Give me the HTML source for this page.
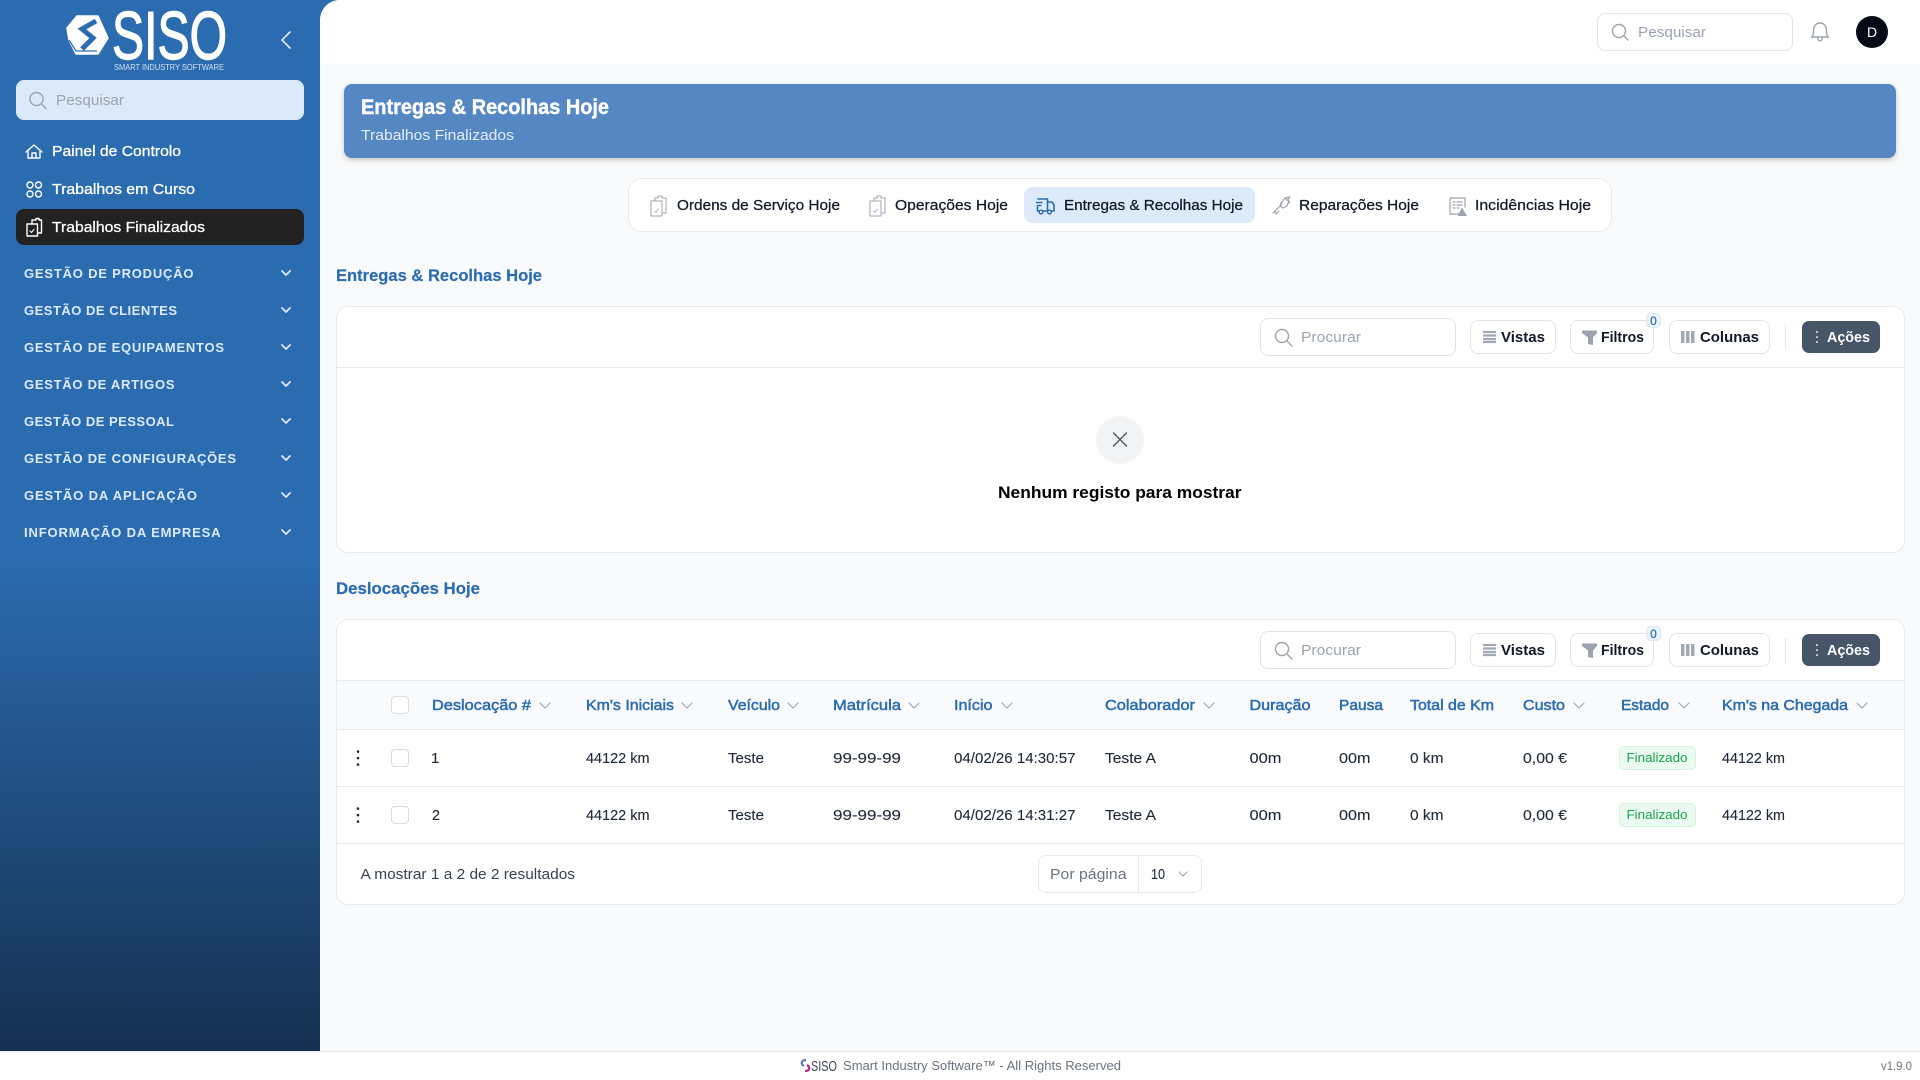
<!DOCTYPE html>
<html lang="pt"><head><meta charset="utf-8"><title>SISO</title>
<style>
html,body{margin:0;padding:0;width:1920px;height:1080px;overflow:hidden;background:#fff;font-family:"Liberation Sans",sans-serif}
div{position:absolute;box-sizing:border-box}
svg{position:absolute;left:0;top:0}
text{font-family:"Liberation Sans",sans-serif;font-size:15px;fill:#1f2937;stroke:#1f2937;stroke-width:.12px}
.g{fill:#9ca3af;stroke:none}
.h{fill:#2b6cb0;stroke:#2b6cb0;stroke-width:.5px;font-size:15px}
.n{fill:#fff;stroke:#fff;stroke-width:.3px;font-size:15px}
.l{fill:#dbeafe;stroke:none;font-weight:700;font-size:13px}
.s{fill:#2b6cb0;stroke:#2b6cb0;stroke-width:.2px;font-size:17px;font-weight:700}
.b{fill:#111827;stroke:#111827;stroke-width:.25px}
.i{fill:none;stroke:#9ca3af;stroke-width:1.4;stroke-linecap:round;stroke-linejoin:round}
.w{fill:none;stroke:#fff;stroke-width:1.4;stroke-linecap:round;stroke-linejoin:round}
.c{fill:none;stroke:#dbeafe;stroke-width:1.8;stroke-linecap:round;stroke-linejoin:round}
.a{fill:none;stroke:#9ca3af;stroke-width:1.1;stroke-linecap:round;stroke-linejoin:round}
</style></head><body>
<div style="left:0;top:0;width:340px;height:1051px;background:linear-gradient(180deg,#2b6cb0 0,#2b6cb0 53%,#153050 100%)"></div>
<div style="left:320px;top:0;width:1600px;height:1051px;background:#f9fafb;border-top-left-radius:20px"></div>
<div style="left:320px;top:0;width:1600px;height:64px;background:#fff;border-top-left-radius:20px"></div>
<div style="left:0;top:1051px;width:1920px;height:29px;background:#fff;border-top:1px solid #e5e7eb"></div>
<div style="left:16px;top:80px;width:288px;height:40px;background:#dbe9fa;border-radius:8px"></div>
<div style="left:16px;top:209px;width:288px;height:36px;background:#222;border-radius:8px"></div>
<div style="left:1597px;top:13px;width:196px;height:38px;background:#fff;border:1px solid #e0e3e8;border-radius:8px"></div>
<div style="left:1856px;top:16px;width:32px;height:32px;background:#050a14;border-radius:50%"></div>
<div style="left:344px;top:84px;width:1552px;height:74px;background:#5588c2;border-radius:8px;box-shadow:0 2px 5px rgba(0,0,0,.22)"></div>
<div style="left:628px;top:178px;width:984px;height:54px;background:#fff;border:1px solid #e8eaee;border-radius:14px"></div>
<div style="left:1024px;top:187px;width:231px;height:36px;background:#dceafa;border-radius:8px"></div>
<div style="left:335.500px;top:306px;width:1569.500px;height:247px;background:#fff;border:1px solid #e8eaee;border-radius:12px"></div>
<div style="left:336px;top:367px;width:1568px;height:1px;background:#e8eaee"></div>
<div style="left:1096px;top:416px;width:48px;height:48px;background:#f3f4f6;border-radius:50%"></div>
<div style="left:335.500px;top:619px;width:1569.500px;height:286px;background:#fff;border:1px solid #e8eaee;border-radius:12px"></div>
<div style="left:336.500px;top:680px;width:1567.500px;height:50px;background:#f9fafb;border-top:1px solid #e8eaee;border-bottom:1px solid #e8eaee"></div>
<div style="left:336.500px;top:786px;width:1567.500px;height:1px;background:#e8eaee"></div>
<div style="left:336.500px;top:843px;width:1567.500px;height:1px;background:#e8eaee"></div>
<div style="left:1260px;top:318px;width:196px;height:38px;background:#fff;border:1px solid #e0e3e8;border-radius:8px"></div>
<div style="left:1470px;top:320px;width:86px;height:34px;background:#fff;border:1px solid #e0e3e8;border-radius:8px"></div>
<div style="left:1570px;top:320px;width:84px;height:34px;background:#fff;border:1px solid #e0e3e8;border-radius:8px"></div>
<div style="left:1669px;top:320px;width:101px;height:34px;background:#fff;border:1px solid #e0e3e8;border-radius:8px"></div>
<div style="left:1785px;top:325px;width:1px;height:24px;background:#e0e3e8"></div>
<div style="left:1802px;top:321px;width:78px;height:32px;background:#475569;border-radius:7px"></div>
<div style="left:1646px;top:313px;width:15px;height:15px;background:#eef4fc;border:1px solid #dbe6f3;border-radius:5px"></div>
<div style="left:1260px;top:631px;width:196px;height:38px;background:#fff;border:1px solid #e0e3e8;border-radius:8px"></div>
<div style="left:1470px;top:633px;width:86px;height:34px;background:#fff;border:1px solid #e0e3e8;border-radius:8px"></div>
<div style="left:1570px;top:633px;width:84px;height:34px;background:#fff;border:1px solid #e0e3e8;border-radius:8px"></div>
<div style="left:1669px;top:633px;width:101px;height:34px;background:#fff;border:1px solid #e0e3e8;border-radius:8px"></div>
<div style="left:1785px;top:638px;width:1px;height:24px;background:#e0e3e8"></div>
<div style="left:1802px;top:634px;width:78px;height:32px;background:#475569;border-radius:7px"></div>
<div style="left:1646px;top:626px;width:15px;height:15px;background:#eef4fc;border:1px solid #dbe6f3;border-radius:5px"></div>
<div style="left:391px;top:696px;width:18px;height:18px;background:#fff;border:1px solid #d9dce1;border-radius:4px"></div>
<div style="left:391px;top:749px;width:18px;height:18px;background:#fff;border:1px solid #d9dce1;border-radius:4px"></div>
<div style="left:391px;top:806px;width:18px;height:18px;background:#fff;border:1px solid #d9dce1;border-radius:4px"></div>
<div style="left:1619px;top:746px;width:77px;height:24px;background:#ecfbf1;border:1px solid #d3f3de;border-radius:5px"></div>
<div style="left:1619px;top:803px;width:77px;height:24px;background:#ecfbf1;border:1px solid #d3f3de;border-radius:5px"></div>
<div style="left:1038px;top:855px;width:164px;height:38px;background:#fff;border:1px solid #e5e7eb;border-radius:8px"></div>
<div style="left:1138px;top:856px;width:1px;height:36px;background:#e5e7eb"></div>
<svg width="1920" height="1080" viewBox="0 0 1920 1080" xmlns="http://www.w3.org/2000/svg">
<!-- logo -->
<path d="M67 28 77 16H98L108 38 98 54H76L69 40Z" fill="#fff" stroke="#fff" stroke-width="1.500" stroke-linejoin="round"/>
<path d="M96 21 82 29 93 38 82 49" fill="none" stroke="#2b6cb0" stroke-width="5"/>
<path d="M69 40 76 51 97 51" fill="none" stroke="#2b6cb0" stroke-width="1.200"/>
<text x="112" y="59" textLength="115" lengthAdjust="spacingAndGlyphs" style="font-size:68px;font-weight:400;fill:#fff;stroke:#fff;stroke-width:1.400px">SISO</text>
<text x="114" y="70" textLength="110" lengthAdjust="spacingAndGlyphs" style="font-size:8px;fill:#cfe0f5;stroke:none">SMART INDUSTRY SOFTWARE</text>
<path class="w" d="M290 32 282 40 290 48" style="stroke-width:1.600;stroke:#dbeafe"/>
<!-- sidebar -->
<circle cx="36.500" cy="99" r="6.500" class="i"/><path class="i" d="M41.500 104 46 108.500"/>
<text class="g" x="56" y="105" textLength="68" lengthAdjust="spacingAndGlyphs" style="font-size:15px">Pesquisar</text>
<path class="w" d="M26 152 34 145 42 152M28 150V158H40V150M32 158V153H36V158"/>
<text class="n" x="52" y="156" textLength="129" lengthAdjust="spacingAndGlyphs">Painel de Controlo</text>
<circle class="w" cx="30" cy="185" r="3"/><circle class="w" cx="38.500" cy="185" r="3"/><circle class="w" cx="30" cy="194" r="3"/><circle class="w" cx="38.500" cy="194" r="3"/>
<text class="n" x="52" y="194" textLength="143" lengthAdjust="spacingAndGlyphs">Trabalhos em Curso</text>
<path class="w" d="M32 224V220H36V218.500H39V220H41.500V233H38M27 224H37.500V236H27Z"/><path class="w" d="M30 231 31.500 232.500 34 229.500" style="stroke-width:1"/>
<text class="n" x="52" y="232" textLength="153" lengthAdjust="spacingAndGlyphs">Trabalhos Finalizados</text>
<text class="l" x="24" y="278" textLength="169.500">GESTÃO DE PRODUÇÃO</text>
<text class="l" x="24" y="315" textLength="153">GESTÃO DE CLIENTES</text>
<text class="l" x="24" y="352" textLength="200">GESTÃO DE EQUIPAMENTOS</text>
<text class="l" x="24" y="389" textLength="150.500">GESTÃO DE ARTIGOS</text>
<text class="l" x="24" y="426" textLength="150">GESTÃO DE PESSOAL</text>
<text class="l" x="24" y="463" textLength="212">GESTÃO DE CONFIGURAÇÕES</text>
<text class="l" x="24" y="500" textLength="173">GESTÃO DA APLICAÇÃO</text>
<text class="l" x="24" y="537" textLength="196.500">INFORMAÇÃO DA EMPRESA</text>
<path class="c" d="M282 271 286 275 290 271M282 308 286 312 290 308M282 345 286 349 290 345M282 382 286 386 290 382M282 419 286 423 290 419M282 456 286 460 290 456M282 493 286 497 290 493M282 530 286 534 290 530"/>
<!-- top -->
<circle class="i" cx="1619" cy="31" r="6.500"/><path class="i" d="M1624 36 1628 40"/>
<text class="g" x="1638" y="37" textLength="68" lengthAdjust="spacingAndGlyphs" style="font-size:15px">Pesquisar</text>
<path class="i" d="M1820 23C1815.500 23 1813.500 27 1813.500 30V34L1811.500 37H1828.500L1826.500 34V30C1826.500 27 1824.500 23 1820 23ZM1817.500 37C1817.500 42 1822.500 42 1822.500 37"/>
<text x="1872" y="37" text-anchor="middle" style="fill:#fff;stroke:none;font-size:14px;font-weight:400">D</text>
<!-- banner -->
<text x="361" y="114" textLength="248" lengthAdjust="spacingAndGlyphs" style="fill:#fff;stroke:#fff;stroke-width:.4px;font-size:21px;font-weight:700">Entregas &amp; Recolhas Hoje</text>
<text x="361" y="140" textLength="153" lengthAdjust="spacingAndGlyphs" style="fill:#e3edf9;stroke:none;font-size:15px">Trabalhos Finalizados</text>
<!-- tabs -->
<path class="i" d="M655 201V198H658V196H662V198H666V213H663M651 201H662V216H651Z" style="stroke-width:1"/><path class="i" d="M654.500 211 656 212.500 658.500 209" style="stroke-width:.8"/>
<text class="b" x="677" y="210" textLength="163" lengthAdjust="spacingAndGlyphs">Ordens de Serviço Hoje</text>
<path class="i" d="M874 201V198H877V196H881V198H885V213H882M870 201H881V216H870Z" style="stroke-width:1"/><path class="i" d="M873.500 211 875 212.500 877.500 209" style="stroke-width:.8"/>
<text class="b" x="895" y="210" textLength="113" lengthAdjust="spacingAndGlyphs">Operações Hoje</text>
<path d="M1038 199H1047.500V210M1047.500 202H1052L1054 205V211H1051.500M1047 211H1043M1039 211H1037.500V206M1036.500 202.500H1042M1037.500 205.500H1041" fill="none" stroke="#2b6cb0" stroke-width="1.600" stroke-linecap="round" stroke-linejoin="round"/><circle cx="1041" cy="212" r="1.900" fill="none" stroke="#2b6cb0" stroke-width="1.400"/><circle cx="1049.500" cy="212" r="1.900" fill="none" stroke="#2b6cb0" stroke-width="1.400"/>
<text class="b" x="1064" y="210" textLength="179" lengthAdjust="spacingAndGlyphs">Entregas &amp; Recolhas Hoje</text>
<path class="i" d="M1273 213 1282 204M1275 211 1276 214 1279 211M1281 203 1285 198 1290 197 1288 199 1289 201 1287 206 1283 208 1280 206Z" style="stroke-width:1.200"/><path class="i" d="M1285 198 1290 203" style="stroke-width:1"/>
<text class="b" x="1299" y="210" textLength="120" lengthAdjust="spacingAndGlyphs">Reparações Hoje</text>
<path class="i" d="M1459 214H1450V198H1465V207M1453 202H1455M1457 202H1462M1453 205H1455M1457 205H1462M1453 208H1455M1457 208H1459" style="stroke-width:1.200"/><path d="M1462 207.500 1467 216H1457.500Z" fill="#9ca3af"/>
<text class="b" x="1475" y="210" textLength="116" lengthAdjust="spacingAndGlyphs">Incidências Hoje</text>
<text class="s" x="336" y="281" textLength="206" lengthAdjust="spacingAndGlyphs">Entregas &amp; Recolhas Hoje</text>
<text class="s" x="336" y="594" textLength="144" lengthAdjust="spacingAndGlyphs">Deslocações Hoje</text>
<!-- toolbar 1 -->
<circle class="i" cx="1282" cy="336" r="6.500"/><path class="i" d="M1287 341 1292 346"/>
<text class="g" x="1301" y="342" textLength="60" lengthAdjust="spacingAndGlyphs">Procurar</text>
<path d="M1483 332H1496M1483 335.500H1496M1483 339H1496M1483 342H1496" stroke="#a3a9b3" stroke-width="2.200"/>
<text class="b" x="1501" y="342" textLength="44" lengthAdjust="spacingAndGlyphs" style="font-weight:700;stroke-width:0">Vistas</text>
<path d="M1582 330.500H1597V333L1593 337.500V345L1588 344V337.500L1582 333Z" fill="#9ca3af"/>
<text class="b" x="1601" y="342" textLength="43" lengthAdjust="spacingAndGlyphs" style="font-weight:700;stroke-width:0">Filtros</text>
<text x="1653.500" y="325" text-anchor="middle" style="fill:#2b6cb0;stroke:#2b6cb0;stroke-width:.2px;font-size:12px">0</text>
<path d="M1681 331H1684.500V343H1681ZM1686 331H1689.500V343H1686ZM1691 331H1694.500V343H1691Z" fill="#a3a9b3"/>
<text class="b" x="1700" y="342" textLength="59" lengthAdjust="spacingAndGlyphs" style="font-weight:700;stroke-width:0">Colunas</text>
<path d="M1817 332V332.100M1817 337V337.100M1817 342V342.100" stroke="#fff" stroke-width="1.800" stroke-linecap="round"/>
<text x="1827" y="342" textLength="43" lengthAdjust="spacingAndGlyphs" style="fill:#fff;stroke:none;font-weight:700">Ações</text>
<path d="M1113.500 433 1126.500 446M1126.500 433 1113.500 446" stroke="#4b5563" stroke-width="1.400" stroke-linecap="round"/>
<text x="998" y="498" textLength="243.500" lengthAdjust="spacingAndGlyphs" style="fill:#000;stroke:none;font-size:17px;font-weight:700">Nenhum registo para mostrar</text>
<!-- toolbar 2 -->
<circle class="i" cx="1282" cy="649" r="6.500"/><path class="i" d="M1287 654 1292 659"/>
<text class="g" x="1301" y="655" textLength="60" lengthAdjust="spacingAndGlyphs">Procurar</text>
<path d="M1483 645H1496M1483 648.500H1496M1483 652H1496M1483 655H1496" stroke="#a3a9b3" stroke-width="2.200"/>
<text class="b" x="1501" y="655" textLength="44" lengthAdjust="spacingAndGlyphs" style="font-weight:700;stroke-width:0">Vistas</text>
<path d="M1582 643.500H1597V646L1593 650.500V658L1588 657V650.500L1582 646Z" fill="#9ca3af"/>
<text class="b" x="1601" y="655" textLength="43" lengthAdjust="spacingAndGlyphs" style="font-weight:700;stroke-width:0">Filtros</text>
<text x="1653.500" y="638" text-anchor="middle" style="fill:#2b6cb0;stroke:#2b6cb0;stroke-width:.2px;font-size:12px">0</text>
<path d="M1681 644H1684.500V656H1681ZM1686 644H1689.500V656H1686ZM1691 644H1694.500V656H1691Z" fill="#a3a9b3"/>
<text class="b" x="1700" y="655" textLength="59" lengthAdjust="spacingAndGlyphs" style="font-weight:700;stroke-width:0">Colunas</text>
<path d="M1817 645V645.100M1817 650V650.100M1817 655V655.100" stroke="#fff" stroke-width="1.800" stroke-linecap="round"/>
<text x="1827" y="655" textLength="43" lengthAdjust="spacingAndGlyphs" style="fill:#fff;stroke:none;font-weight:700">Ações</text>
<!-- table head -->
<text class="h" x="432" y="710" textLength="99" lengthAdjust="spacingAndGlyphs">Deslocação #</text>
<text class="h" x="586" y="710" textLength="88" lengthAdjust="spacingAndGlyphs">Km's Iniciais</text>
<text class="h" x="728" y="710" textLength="52" lengthAdjust="spacingAndGlyphs">Veículo</text>
<text class="h" x="833" y="710" textLength="68" lengthAdjust="spacingAndGlyphs">Matrícula</text>
<text class="h" x="954" y="710" textLength="38.500" lengthAdjust="spacingAndGlyphs">Início</text>
<text class="h" x="1105" y="710" textLength="90" lengthAdjust="spacingAndGlyphs">Colaborador</text>
<text class="h" x="1249.500" y="710" textLength="61" lengthAdjust="spacingAndGlyphs">Duração</text>
<text class="h" x="1339" y="710" textLength="44" lengthAdjust="spacingAndGlyphs">Pausa</text>
<text class="h" x="1410" y="710" textLength="84" lengthAdjust="spacingAndGlyphs">Total de Km</text>
<text class="h" x="1523" y="710" textLength="42" lengthAdjust="spacingAndGlyphs">Custo</text>
<text class="h" x="1621" y="710" textLength="48" lengthAdjust="spacingAndGlyphs">Estado</text>
<text class="h" x="1722" y="710" textLength="126" lengthAdjust="spacingAndGlyphs">Km's na Chegada</text>
<path class="a" d="M540 703 545 708 550 703M682 703 687 708 692 703M788 703 793 708 798 703M909 703 914 708 919 703M1002 703 1007 708 1012 703M1204 703 1209 708 1214 703M1574 703 1579 708 1584 703M1679 703 1684 708 1689 703M1857 703 1862 708 1867 703M1179 872 1183 876 1187 872"/>
<!-- row 1 -->
<path d="M358 751.500V751.600M358 758V758.100M358 764.500V764.600" stroke="#1f2937" stroke-width="2.600" stroke-linecap="round"/>
<text x="431" y="763">1</text>
<text x="586" y="763" textLength="63.500" lengthAdjust="spacingAndGlyphs">44122 km</text>
<text x="728" y="763" textLength="36" lengthAdjust="spacingAndGlyphs">Teste</text>
<text x="833" y="763" textLength="68" lengthAdjust="spacingAndGlyphs">99-99-99</text>
<text x="954" y="763" textLength="121.500" lengthAdjust="spacingAndGlyphs">04/02/26 14:30:57</text>
<text x="1105" y="763" textLength="51" lengthAdjust="spacingAndGlyphs">Teste A</text>
<text x="1249.500" y="763" textLength="32" lengthAdjust="spacingAndGlyphs">00m</text>
<text x="1339" y="763" textLength="31.500" lengthAdjust="spacingAndGlyphs">00m</text>
<text x="1410" y="763" textLength="33.500" lengthAdjust="spacingAndGlyphs">0 km</text>
<text x="1523" y="763" textLength="44" lengthAdjust="spacingAndGlyphs">0,00 €</text>
<text x="1626.500" y="762" textLength="61" lengthAdjust="spacingAndGlyphs" style="fill:#16a34a;stroke:none;font-size:13px">Finalizado</text>
<text x="1722" y="763" textLength="63" lengthAdjust="spacingAndGlyphs">44122 km</text>
<!-- row 2 -->
<path d="M358 808.500V808.600M358 815V815.100M358 821.500V821.600" stroke="#1f2937" stroke-width="2.600" stroke-linecap="round"/>
<text x="432" y="820" textLength="8" lengthAdjust="spacingAndGlyphs">2</text>
<text x="586" y="820" textLength="63.500" lengthAdjust="spacingAndGlyphs">44122 km</text>
<text x="728" y="820" textLength="36" lengthAdjust="spacingAndGlyphs">Teste</text>
<text x="833" y="820" textLength="68" lengthAdjust="spacingAndGlyphs">99-99-99</text>
<text x="954" y="820" textLength="121.500" lengthAdjust="spacingAndGlyphs">04/02/26 14:31:27</text>
<text x="1105" y="820" textLength="51" lengthAdjust="spacingAndGlyphs">Teste A</text>
<text x="1249.500" y="820" textLength="32" lengthAdjust="spacingAndGlyphs">00m</text>
<text x="1339" y="820" textLength="31.500" lengthAdjust="spacingAndGlyphs">00m</text>
<text x="1410" y="820" textLength="33.500" lengthAdjust="spacingAndGlyphs">0 km</text>
<text x="1523" y="820" textLength="44" lengthAdjust="spacingAndGlyphs">0,00 €</text>
<text x="1626.500" y="819" textLength="61" lengthAdjust="spacingAndGlyphs" style="fill:#16a34a;stroke:none;font-size:13px">Finalizado</text>
<text x="1722" y="820" textLength="63" lengthAdjust="spacingAndGlyphs">44122 km</text>
<!-- pagination -->
<text x="360.500" y="879" textLength="214.500" lengthAdjust="spacingAndGlyphs" style="fill:#374151;stroke:none">A mostrar 1 a 2 de 2 resultados</text>
<text x="1050" y="879" textLength="76.500" lengthAdjust="spacingAndGlyphs" style="fill:#6b7280;stroke:none">Por página</text>
<text x="1151" y="879" textLength="14" lengthAdjust="spacingAndGlyphs">10</text>
<!-- footer -->
<path d="M806 1060C801 1060 800.500 1064 804 1066" fill="none" stroke="#5b7fb5" stroke-width="2.200"/><path d="M805 1071C810 1071 810.500 1067 807 1065" fill="none" stroke="#c2277d" stroke-width="2.200"/>
<text x="811" y="1071" textLength="26" lengthAdjust="spacingAndGlyphs" style="font-size:15px;fill:#374151;stroke:none;font-weight:400">SISO</text>
<text x="843" y="1070" textLength="278" lengthAdjust="spacingAndGlyphs" style="font-size:13px;fill:#6b7280;stroke:none">Smart Industry Software™ - All Rights Reserved</text>
<text x="1881" y="1070" textLength="31" lengthAdjust="spacingAndGlyphs" style="font-size:12px;fill:#6b7280;stroke:none">v1.9.0</text>
</svg>
</body></html>
